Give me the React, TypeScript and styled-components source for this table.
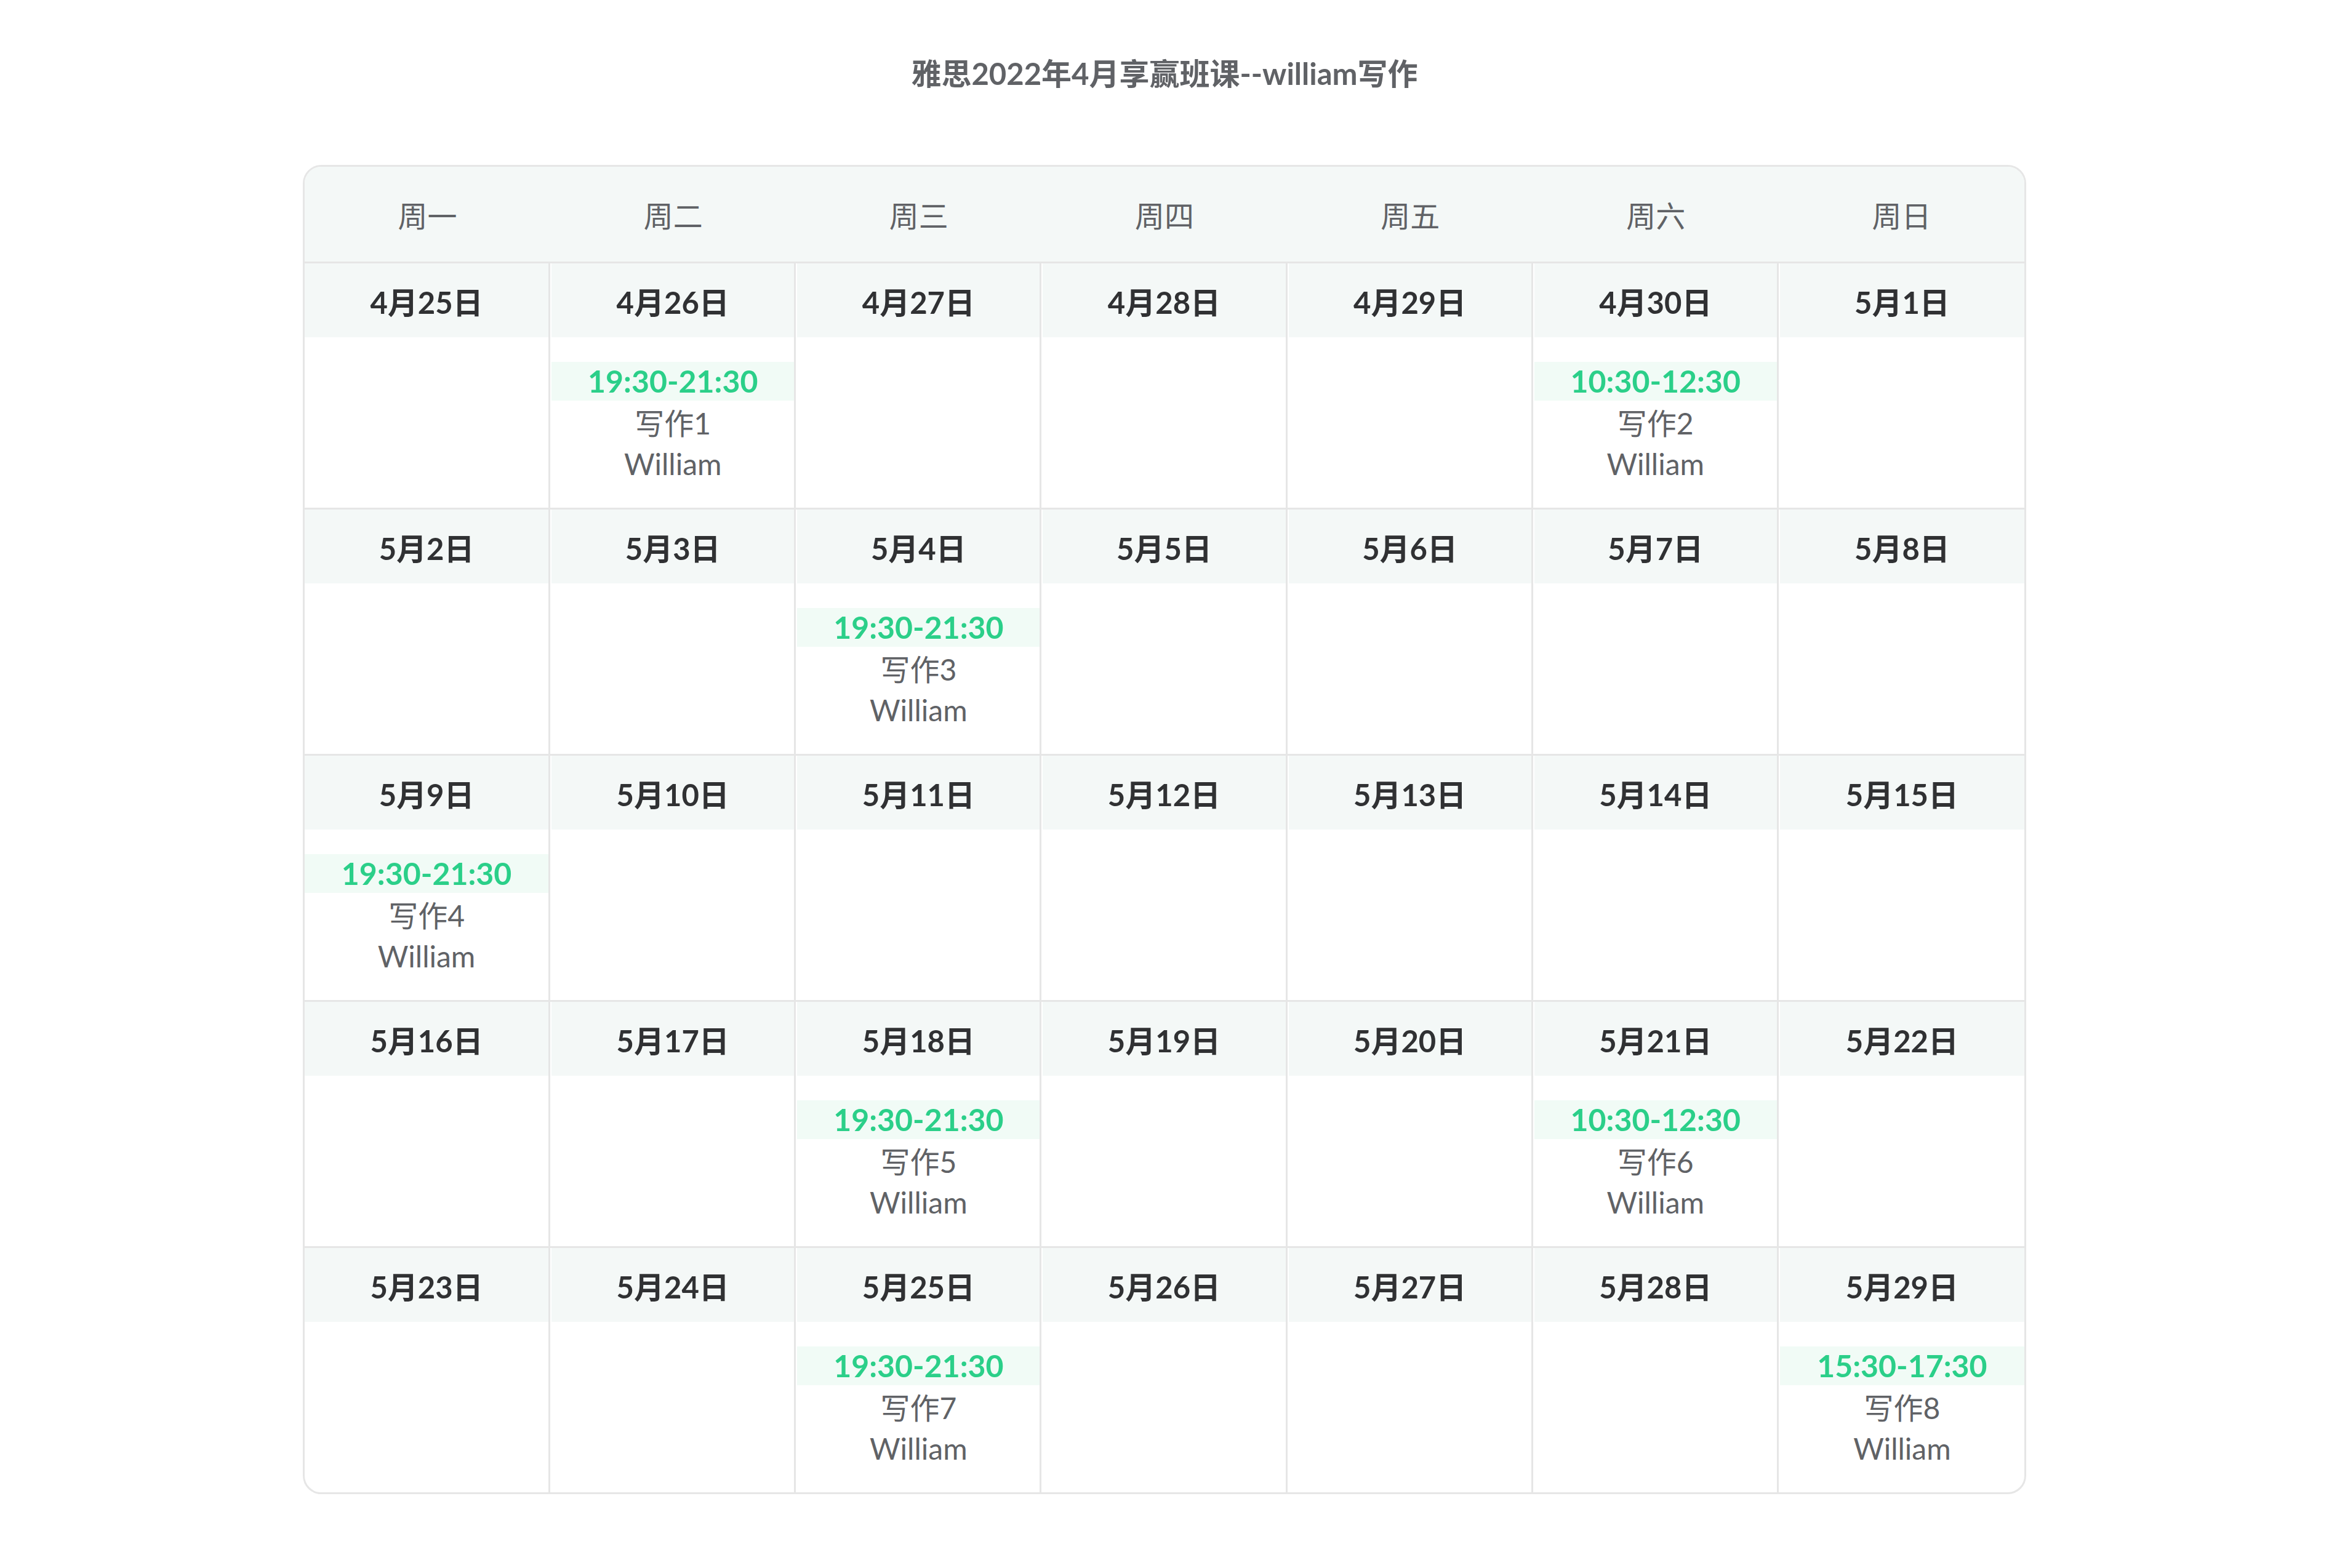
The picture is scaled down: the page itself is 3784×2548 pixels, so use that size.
import React from 'react';
import styled, { createGlobalStyle } from 'styled-components';

const GlobalStyle = createGlobalStyle`
  html, body {
    margin: 0;
    padding: 0;
    background: #ffffff;
  }
  * {
    box-sizing: border-box;
  }
`;

const FONT = `Lato, "Noto Sans CJK SC", "Noto Sans", sans-serif`;
const LINE = '#e6e6e6';
const PALE = '#f4f8f7';

const Page = styled.div`
  display: flex;
  flex-direction: column;
  align-items: center;
  padding: 83px 0 120px;
  font-family: ${FONT};
`;

const Title = styled.h1`
  margin: 0 0 113px;
  font-size: 49px;
  line-height: 72px;
  font-weight: 700;
  color: #606266;
`;

const Calendar = styled.div`
  width: 2800px;
  border: 3px solid ${LINE};
  border-radius: 30px;
  overflow: hidden;
`;

const WeekHead = styled.div`
  display: grid;
  grid-template-columns: repeat(7, 1fr);
  height: 157px;
  background: ${PALE};
  border-bottom: 3px solid ${LINE};
  .weekday {
    display: flex;
    align-items: center;
    justify-content: center;
    font-size: 48px;
    color: #606266;
  }
`;

const WeekRow = styled.div<{ $last: boolean }>`
  display: grid;
  grid-template-columns: repeat(7, 1fr);
  border-bottom: ${(p) => (p.$last ? 'none' : `3px solid ${LINE}`)};
`;

const DayCell = styled.div<{ $first: boolean; $last: boolean }>`
  display: flex;
  flex-direction: column;
  border-right: ${(p) => (p.$last ? 'none' : `3px solid ${LINE}`)};
  padding-left: ${(p) => (p.$first ? '0' : '2px')};
  .date {
    height: 120px;
    display: flex;
    align-items: center;
    justify-content: center;
    background: ${PALE};
    font-size: 49px;
    font-weight: 700;
    color: #303133;
  }
  .body {
    height: 277px;
    padding-top: 40px;
    text-align: center;
  }
`;

const EventTime = styled.div`
  height: 63px;
  line-height: 63px;
  margin-bottom: 4px;
  background: #f1fbf6;
  color: #2bcf89;
  font-size: 50px;
  font-weight: 700;
`;

const EventLine = styled.div`
  line-height: 66px;
  font-size: 48px;
  color: #606266;
`;

type Lesson = { time: string; name: string; teacher: string };
type Day = { date: string; lesson?: Lesson };

const weekdays = ['周一', '周二', '周三', '周四', '周五', '周六', '周日'];

const lesson = (time: string, n: number): Lesson => ({
  time,
  name: `写作${n}`,
  teacher: 'William',
});

const weeks: Day[][] = [
  [
    { date: '4月25日' },
    { date: '4月26日', lesson: lesson('19:30-21:30', 1) },
    { date: '4月27日' },
    { date: '4月28日' },
    { date: '4月29日' },
    { date: '4月30日', lesson: lesson('10:30-12:30', 2) },
    { date: '5月1日' },
  ],
  [
    { date: '5月2日' },
    { date: '5月3日' },
    { date: '5月4日', lesson: lesson('19:30-21:30', 3) },
    { date: '5月5日' },
    { date: '5月6日' },
    { date: '5月7日' },
    { date: '5月8日' },
  ],
  [
    { date: '5月9日', lesson: lesson('19:30-21:30', 4) },
    { date: '5月10日' },
    { date: '5月11日' },
    { date: '5月12日' },
    { date: '5月13日' },
    { date: '5月14日' },
    { date: '5月15日' },
  ],
  [
    { date: '5月16日' },
    { date: '5月17日' },
    { date: '5月18日', lesson: lesson('19:30-21:30', 5) },
    { date: '5月19日' },
    { date: '5月20日' },
    { date: '5月21日', lesson: lesson('10:30-12:30', 6) },
    { date: '5月22日' },
  ],
  [
    { date: '5月23日' },
    { date: '5月24日' },
    { date: '5月25日', lesson: lesson('19:30-21:30', 7) },
    { date: '5月26日' },
    { date: '5月27日' },
    { date: '5月28日' },
    { date: '5月29日', lesson: lesson('15:30-17:30', 8) },
  ],
];

const App: React.FC = () => (
  <>
    <GlobalStyle />
    <Page>
      <Title>雅思2022年4月享赢班课--william写作</Title>
      <Calendar>
        <WeekHead>
          {weekdays.map((w) => (
            <div className="weekday" key={w}>
              {w}
            </div>
          ))}
        </WeekHead>
        {weeks.map((week, i) => (
          <WeekRow key={week[0].date} $last={i === weeks.length - 1}>
            {week.map((day, j) => (
              <DayCell key={day.date} $first={j === 0} $last={j === 6}>
                <div className="date">{day.date}</div>
                <div className="body">
                  {day.lesson && (
                    <>
                      <EventTime>{day.lesson.time}</EventTime>
                      <EventLine>{day.lesson.name}</EventLine>
                      <EventLine>{day.lesson.teacher}</EventLine>
                    </>
                  )}
                </div>
              </DayCell>
            ))}
          </WeekRow>
        ))}
      </Calendar>
    </Page>
  </>
);

export default App;
